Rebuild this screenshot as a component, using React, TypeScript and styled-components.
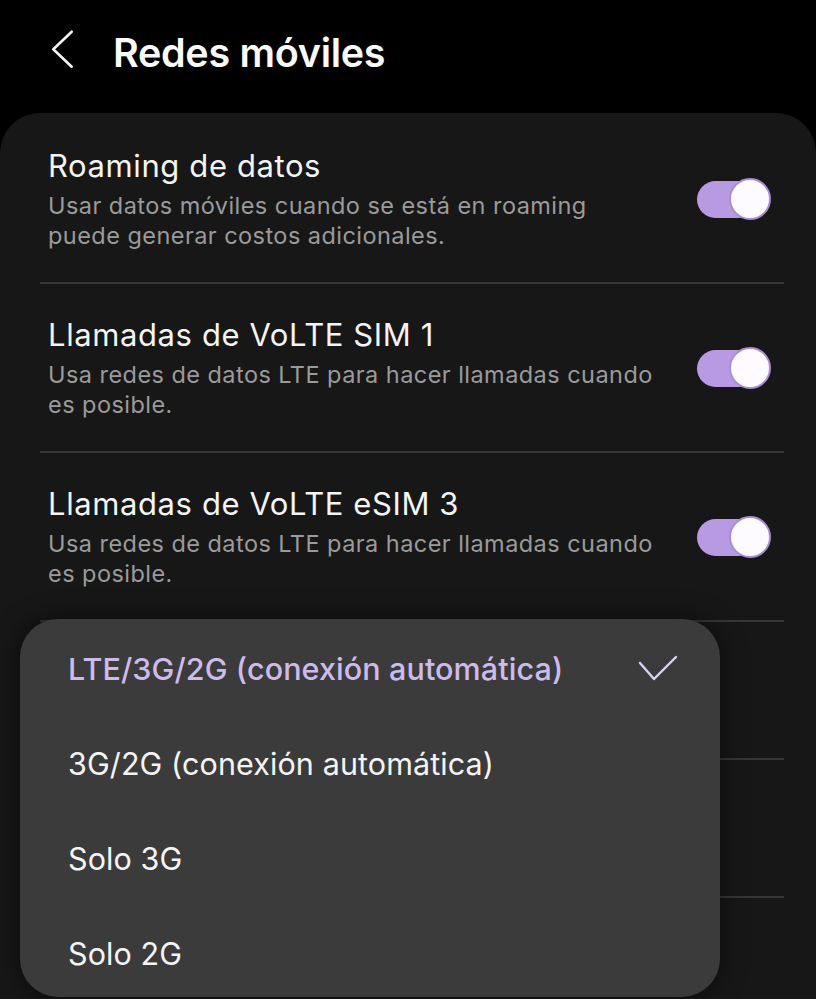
import React from "react";
import styled, { createGlobalStyle } from "styled-components";

const Global = createGlobalStyle`
  html, body { margin: 0; padding: 0; background: #000; }
  body { font-family: Inter, Roboto, "Noto Sans", sans-serif; -webkit-font-smoothing: antialiased; }
`;

const Screen = styled.div`
  position: relative;
  width: 816px;
  height: 999px;
  overflow: hidden;
  display: flex;
  flex-direction: column;
  background: #000;
`;

const Header = styled.header`
  flex: none;
  height: 113px;
  box-sizing: border-box;
  display: flex;
  align-items: flex-start;
  padding: 29px 0 0 48px;
`;

const BackIcon = styled.svg`
  width: 28px;
  height: 48px;
  flex: none;
`;

const PageTitle = styled.h1`
  margin: 0 0 0 37px;
  font-size: 39.5px;
  line-height: 48px;
  font-weight: 600;
  color: #fafafa;
  letter-spacing: -0.3px;
`;

const Card = styled.main`
  flex: 1;
  background: #171717;
  border-radius: 40px 40px 0 0;
  padding: 2px 32px 0 40px;
`;

const Row = styled.div<{ $h: number }>`
  height: ${(p) => p.$h}px;
  flex: none;
  box-sizing: border-box;
  display: flex;
  align-items: flex-start;
  justify-content: space-between;
  padding: 0 13px 0 8px;
  border-bottom: 2px solid #363636;
`;

const TextBlock = styled.div`
  display: flex;
  flex-direction: column;
  padding-top: 33px;
`;

const RowTitle = styled.div`
  font-size: 31px;
  line-height: 36px;
  letter-spacing: 0.6px;
  color: #f4f4f4;
`;

const RowSub = styled.div`
  margin-top: 7px;
  font-size: 23.5px;
  line-height: 30px;
  letter-spacing: 0.45px;
  color: #9b9b9b;
`;

const Toggle = styled.div`
  position: relative;
  align-self: center;
  width: 74px;
  height: 42px;
  flex: none;
`;

const Track = styled.div`
  position: absolute;
  left: 0;
  top: 3px;
  width: 60px;
  height: 37px;
  border-radius: 19px;
  background: #b79ae2;
`;

const Thumb = styled.div`
  position: absolute;
  right: 0;
  top: 0;
  width: 42px;
  height: 42px;
  box-sizing: border-box;
  border-radius: 50%;
  background: #fdfbff;
  border: 2px solid #a98cd6;
`;

const Popup = styled.div`
  position: absolute;
  left: 20px;
  top: 619px;
  width: 700px;
  height: 378px;
  box-sizing: border-box;
  padding-top: 2px;
  border-radius: 38px;
  background: #3b3b3b;
  box-shadow: 0 0 26px rgba(0, 0, 0, 0.55);
  display: flex;
  flex-direction: column;
`;

const Option = styled.div<{ $selected?: boolean }>`
  height: 95px;
  flex: none;
  display: flex;
  align-items: center;
  justify-content: space-between;
  padding: 0 42px 0 48px;
  font-size: 30.5px;
  letter-spacing: 0.1px;
  font-weight: ${(p) => (p.$selected ? 500 : 400)};
  color: ${(p) => (p.$selected ? "#cdbbec" : "#f4f4f4")};
`;

const Check = styled.svg`
  width: 40px;
  height: 28px;
  flex: none;
`;

type Item = { title?: string; sub?: string[]; toggle?: boolean; h: number };

const rows: Item[] = [
  {
    title: "Roaming de datos",
    sub: ["Usar datos móviles cuando se está en roaming", "puede generar costos adicionales."],
    toggle: true,
    h: 169,
  },
  {
    title: "Llamadas de VoLTE SIM 1",
    sub: ["Usa redes de datos LTE para hacer llamadas cuando", "es posible."],
    toggle: true,
    h: 169,
  },
  {
    title: "Llamadas de VoLTE eSIM 3",
    sub: ["Usa redes de datos LTE para hacer llamadas cuando", "es posible."],
    toggle: true,
    h: 169,
  },
  { h: 138 },
  { h: 138 },
  { h: 138 },
];

const options = [
  "LTE/3G/2G (conexión automática)",
  "3G/2G (conexión automática)",
  "Solo 3G",
  "Solo 2G",
];

export default function App() {
  return (
    <>
      <Global />
      <Screen>
        <Header>
          <BackIcon viewBox="0 0 28 48">
            <path
              d="M23.7 2.7 L5.3 20.3 L23.7 37.7"
              fill="none"
              stroke="#f4f4f4"
              strokeWidth="2.6"
              strokeLinecap="round"
              strokeLinejoin="round"
            />
          </BackIcon>
          <PageTitle>Redes móviles</PageTitle>
        </Header>
        <Card>
          {rows.map((r, i) => (
            <Row key={i} $h={r.h}>
              {r.title && (
                <TextBlock>
                  <RowTitle>{r.title}</RowTitle>
                  {r.sub && (
                    <RowSub>
                      {r.sub[0]}
                      <br />
                      {r.sub[1]}
                    </RowSub>
                  )}
                </TextBlock>
              )}
              {r.toggle && (
                <Toggle>
                  <Track />
                  <Thumb />
                </Toggle>
              )}
            </Row>
          ))}
        </Card>
        <Popup>
          {options.map((o, i) => (
            <Option key={o} $selected={i === 0}>
              <span>{o}</span>
              {i === 0 && (
                <Check viewBox="0 0 40 28">
                  <path
                    d="M2 8 L16 24 L38 2"
                    fill="none"
                    stroke="#ddd0f2"
                    strokeWidth="2.4"
                    strokeLinecap="round"
                    strokeLinejoin="round"
                  />
                </Check>
              )}
            </Option>
          ))}
        </Popup>
      </Screen>
    </>
  );
}
